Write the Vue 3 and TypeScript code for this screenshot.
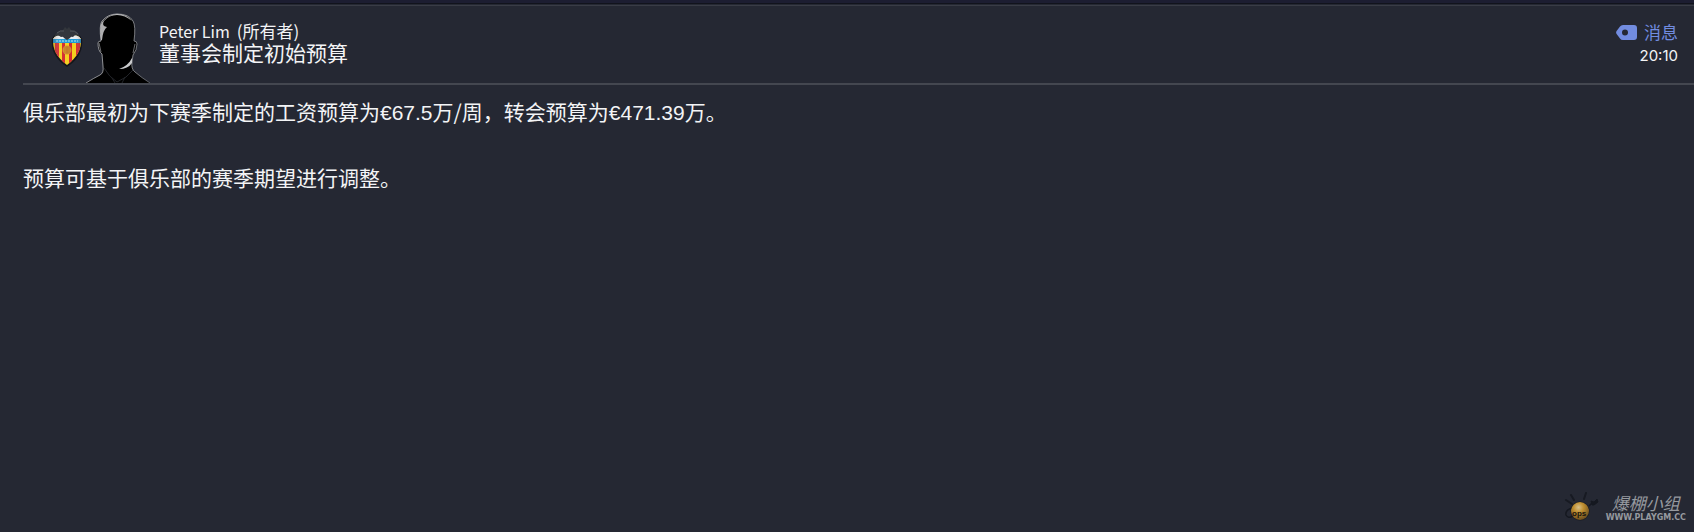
<script setup lang="ts">
interface Segment {
  text: string
  amount?: boolean
}

interface Message {
  sender: string
  role: string
  title: string
  category: string
  time: string
  paragraphs: Segment[][]
}

const message: Message = {
  sender: 'Peter Lim',
  role: '(所有者)',
  title: '董事会制定初始预算',
  category: '消息',
  time: '20:10',
  paragraphs: [
    [
      { text: '俱乐部最初为下赛季制定的工资预算为' },
      { text: '€67.5', amount: true },
      { text: '万/周，转会预算为' },
      { text: '€471.39', amount: true },
      { text: '万。' },
    ],
    [{ text: '预算可基于俱乐部的赛季期望进行调整。' }],
  ],
}
</script>

<template>
  <main class="panel">
    <header class="head">
      <div class="pictures">
        <svg class="crest" viewBox="0 0 32 42" aria-hidden="true">
          <defs>
            <clipPath id="shield">
              <path d="M2 13Q5 8 16 9Q27 8 30 13Q31 28 16 39Q1 28 2 13Z" />
            </clipPath>
            <linearGradient id="gloss" x1="0" y1="0" x2="1" y2="0">
              <stop offset="0" stop-color="#300" stop-opacity=".35" />
              <stop offset=".3" stop-color="#fff" stop-opacity=".06" />
              <stop offset=".75" stop-color="#fff" stop-opacity="0" />
              <stop offset="1" stop-color="#300" stop-opacity=".4" />
            </linearGradient>
          </defs>
          <path d="M1 13Q4 5 16 6Q28 5 31 13Q33 30 16 41Q-1 30 1 13Z" fill="#14161c" />
          <g clip-path="url(#shield)">
            <rect width="32" height="42" fill="#f5cf1c" />
            <path d="M4 17h4v25H4zM11 17h3v25h-3zM18 17h3v25h-3zM25 17h4v25h-4z" fill="#d3262b" />
            <rect y="7" width="32" height="7" fill="#e9ecee" />
            <rect y="13" width="32" height="4" fill="#1b9ad6" />
            <path d="M5 15h22" stroke="#b9dff0" stroke-width="1" stroke-dasharray="2 1" />
            <circle cx="16" cy="24" r="4.500" fill="#d38b27" />
            <path d="M13 22h6M13 24h6M13 26h6M16 20v8" stroke="#b66d20" stroke-width=".6" />
            <rect width="32" height="42" fill="url(#gloss)" />
          </g>
          <path
            d="M3 11Q6 4 12 4L14 1L16 3L18 1L20 4Q27 4 29 11Q25 7 22 11Q20 10 19 12L16 14L13 12Q12 10 10 11Q7 8 3 11Z"
            fill="#33363c"
          />
          <path d="M6 7Q9 4 13 5M19 5Q24 4 27 8" fill="none" stroke="#5b5e63" stroke-width=".8" />
        </svg>
        <svg class="portrait" viewBox="0 0 66 70" aria-hidden="true">
          <defs>
            <linearGradient id="rim" x1="0" y1="0" x2="1" y2="0">
              <stop offset="0" stop-color="#b9bbbf" />
              <stop offset=".5" stop-color="#e0e1e2" />
              <stop offset="1" stop-color="#75787e" />
            </linearGradient>
          </defs>
          <path
            d="M1 70Q9 65 15 62Q19 60 18 53L17 41Q13 38 13 30Q13 28 16 28Q14 12 17 8Q23 1 32 1Q44 1 48 8Q51 13 49 28Q52 28 52 31Q52 37 48 42L47 49Q46 56 50 59Q57 65 65 70Z"
            fill="#000"
          />
          <path
            d="M1 70Q9 65 15 62Q19 60 18 53L17 41Q13 38 13 30Q13 28 16 28Q14 12 17 8Q23 1 32 1Q44 1 48 8Q51 13 49 28Q52 28 52 31Q52 37 48 42L47 49Q46 56 50 59Q57 65 65 70"
            fill="none" stroke="url(#rim)" stroke-width=".9" opacity=".75"
          />
          <path d="M16 27Q14 11 18 8Q23 2 32 1Q42 1 47 8Q40 2 32 2Q24 2 19 8Q16 13 22 14Q18 17 17 27Z" fill="#d9dadc" opacity=".8" />
          <path d="M34 56Q43 53 47 45L47 50Q43 56 34 56Z" fill="#c9cacc" />
          <path d="M14 30l2 9M50 31l-2 9" stroke="#85878b" stroke-width=".8" />
          <path d="M19 55Q24 64 32 69Q42 65 48 57M27 65l3 5M40 64l-3 6" fill="none" stroke="#222429" stroke-width="1" />
        </svg>
      </div>
      <div class="heading">
        <p class="sender">
          <span>{{ message.sender }}</span>
          <span class="role">{{ message.role }}</span>
        </p>
        <h1 class="title">{{ message.title }}</h1>
      </div>
      <div class="meta">
        <p class="category">
          <svg class="tag" viewBox="0 0 21 15" aria-hidden="true">
            <path
              d="M7 0H18Q21 0 21 3V12Q21 15 18 15H7Q5 15 4 13.500L.6 9Q-.4 7.500.6 6L4 1.500Q5 0 7 0ZM9 4.500a3 3 0 1 0 0 6a3 3 0 1 0 0-6Z"
              fill="#728ce0" fill-rule="evenodd"
            />
          </svg>
          <span>{{ message.category }}</span>
        </p>
        <time class="time">{{ message.time }}</time>
      </div>
    </header>

    <article class="body">
      <p v-for="(segments, index) in message.paragraphs" :key="index">
        <span v-for="segment in segments" :key="segment.text" :class="{ amount: segment.amount }">{{ segment.text }}</span>
      </p>
    </article>

    <footer class="brand">
      <svg class="bulb" viewBox="0 0 36 32" aria-hidden="true">
        <defs>
          <radialGradient id="ball" cx=".42" cy=".3" r=".7">
            <stop offset="0" stop-color="#d8c08a" />
            <stop offset=".4" stop-color="#c08f30" />
            <stop offset="1" stop-color="#6b4d1e" />
          </radialGradient>
        </defs>
        <path d="M2 8l6 4M7 3l3 5M22 1l-2 6" stroke="#171a22" stroke-width="2" stroke-linecap="round" />
        <path d="M8 16Q1 18 2 23Q4 27 9 24M25 14l4-4" fill="none" stroke="#151820" stroke-width="1.500" />
        <path d="M27 9l3 1l3-3l1 3l-4 3l-2 0z" fill="#151820" stroke="#151820" />
        <circle cx="16" cy="19" r="9.500" fill="#171a22" />
        <circle cx="16" cy="19" r="9" fill="url(#ball)" />
        <text x="8" y="24" class="bulb-text">ops</text>
      </svg>
      <div class="brand-text">
        <span class="brand-name">爆棚小组</span>
        <span class="brand-url">WWW.PLAYGM.CC</span>
      </div>
    </footer>
  </main>
</template>

<style>
body {
  margin: 0;
  background: #252833;
}
</style>

<style scoped>
.panel {
  box-sizing: border-box;
  display: flex;
  flex-direction: column;
  min-height: 100vh;
  padding-left: 23px;
  background: linear-gradient(#1c1d31 0 3px, #11131c 3px 4px, #252833 4px 5px, #393c46 5px 6px, #252833 6px);
  color: #f3f4f6;
  font-family: "Noto Sans CJK SC", sans-serif;
}

p,
h1 {
  margin: 0;
  font-weight: 400;
}

.head {
  display: flex;
  height: 70px;
  padding: 13px 16px 0 0;
  border-bottom: 2px solid #444750;
}

.pictures {
  display: flex;
  align-items: flex-end;
  gap: 2px;
  padding-left: 28px;
}

.crest {
  width: 32px;
  height: 42px;
  margin-bottom: 15px;
}

.portrait {
  width: 66px;
  height: 70px;
}

.heading {
  flex: 1;
  padding: 8px 0 0 8px;
}

.sender {
  display: flex;
  align-items: baseline;
  gap: 7px;
  font-size: 16px;
  line-height: 20px;
}

.role {
  font-size: 17px;
}

.title {
  font-size: 21px;
  line-height: 22px;
}

.meta {
  display: flex;
  flex-direction: column;
  align-items: flex-end;
  padding-top: 7px;
}

.category {
  display: flex;
  align-items: center;
  gap: 7px;
  color: #728ce0;
  font-size: 17px;
  line-height: 24px;
}

.tag {
  width: 21px;
  height: 15px;
}

.time {
  font-family: Inter, sans-serif;
  font-size: 15px;
  line-height: 24px;
}

.body {
  display: flex;
  flex-direction: column;
  gap: 34px;
  flex: 1;
  padding-top: 10px;
  font-size: 21px;
  line-height: 32px;
}

.amount {
  font-family: "Liberation Sans", sans-serif;
  line-height: 1;
}

.brand {
  display: flex;
  align-self: flex-end;
  align-items: center;
  gap: 6px;
  padding: 0 8px 8px 0;
  color: #96999f;
}

.bulb {
  width: 36px;
  height: 32px;
}

.bulb-text {
  fill: #17130e;
  font: bold 8px "Liberation Sans", sans-serif;
}

.brand-text {
  display: flex;
  flex-direction: column;
  align-items: center;
}

.brand-name {
  font: italic 17px/20px "Noto Sans CJK SC", sans-serif;
}

.brand-url {
  font: bold 8px/10px "DejaVu Sans", sans-serif;
}
</style>
